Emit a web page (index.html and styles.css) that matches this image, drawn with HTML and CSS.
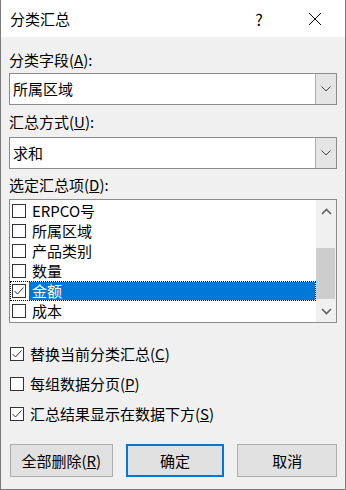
FILE: index.html
```html
<!DOCTYPE html>
<html lang="zh">

<head>
    <meta charset="utf-8">
    <meta name="viewport" content="width=device-width, initial-scale=1.0">
    <title>分类汇总</title>
    <link rel="stylesheet" href="styles.css">
</head>

<body>
    <div class="dialog">
        <div class="titlebar">
            <div class="title">分类汇总</div>
            <div class="help">?</div>
            <div class="close">
                <svg width="14" height="14" viewBox="0 0 14 14">
                    <path d="M1 1 L13 13 M13 1 L1 13" stroke="#000" stroke-width="1" fill="none" />
                </svg>
            </div>
        </div>

        <div class="content">
            <div class="label first">分类字段(<u>A</u>):</div>
            <div class="select">
                <div class="value">所属区域</div>
                <div class="dropbtn">
                    <svg width="10" height="6" viewBox="0 0 10 6">
                        <path d="M0.5 0.5 L5 5 L9.5 0.5" stroke="#444" stroke-width="1" fill="none" />
                    </svg>
                </div>
            </div>

            <div class="label second">汇总方式(<u>U</u>):</div>
            <div class="select select2">
                <div class="value">求和</div>
                <div class="dropbtn">
                    <svg width="10" height="6" viewBox="0 0 10 6">
                        <path d="M0.5 0.5 L5 5 L9.5 0.5" stroke="#444" stroke-width="1" fill="none" />
                    </svg>
                </div>
            </div>

            <div class="label third">选定汇总项(<u>D</u>):</div>
            <div class="listbox">
                <div class="items">
                    <div class="item"><span class="cb"></span><span class="txt">ERPCO号</span></div>
                    <div class="item"><span class="cb"></span><span class="txt">所属区域</span></div>
                    <div class="item"><span class="cb"></span><span class="txt">产品类别</span></div>
                    <div class="item"><span class="cb"></span><span class="txt">数量</span></div>
                    <div class="item valgt">
                        <span class="cb">
                            <svg width="12" height="12" viewBox="0 0 12 12">
                                <path d="M1.5 6 L4.5 9 L10.5 2.5" stroke="#333" stroke-width="1" fill="none" />
                            </svg>
                        </span>
                        <span class="txt">金额</span>
                    </div>
                    <div class="item"><span class="cb"></span><span class="txt">成本</span></div>
                </div>
                <div class="scrollbar">
                    <div class="arrow">
                        <svg width="11" height="7" viewBox="0 0 11 7">
                            <path d="M1 6 L5.5 1.5 L10 6" stroke="#606060" stroke-width="1.6" fill="none" />
                        </svg>
                    </div>
                    <div class="track"><div class="thumb"></div></div>
                    <div class="arrow">
                        <svg width="11" height="7" viewBox="0 0 11 7">
                            <path d="M1 1 L5.5 5.5 L10 1" stroke="#606060" stroke-width="1.6" fill="none" />
                        </svg>
                    </div>
                </div>
            </div>

            <div class="options">
                <div class="option">
                    <span class="cb">
                        <svg width="12" height="12" viewBox="0 0 12 12">
                            <path d="M1.5 6 L4.5 9 L10.5 2.5" stroke="#333" stroke-width="1" fill="none" />
                        </svg>
                    </span>
                    <span>替换当前分类汇总(<u>C</u>)</span>
                </div>
                <div class="option">
                    <span class="cb"></span>
                    <span>每组数据分页(<u>P</u>)</span>
                </div>
                <div class="option">
                    <span class="cb">
                        <svg width="12" height="12" viewBox="0 0 12 12">
                            <path d="M1.5 6 L4.5 9 L10.5 2.5" stroke="#333" stroke-width="1" fill="none" />
                        </svg>
                    </span>
                    <span>汇总结果显示在数据下方(<u>S</u>)</span>
                </div>
            </div>

            <div class="buttons">
                <button class="knap slet">全部删除(<u>R</u>)</button>
                <button class="knap ok">确定</button>
                <button class="knap annuller">取消</button>
            </div>
        </div>
    </div>
</body>

</html>
```

FILE: styles.css
```css
body {
    margin: 0;
    font-family: "Noto Sans CJK SC", "Microsoft YaHei", sans-serif;
    font-size: 15px;
    color: #000;
}

.dialog {
    width: 346px;
    height: 490px;
    box-sizing: border-box;
    border: 1px solid #7a7a7a;
    border-top: none;
    background-color: #f0f0f0;
    display: flex;
    flex-direction: column;
}

.titlebar {
    height: 37px;
    background-color: #fff;
    display: flex;
    align-items: center;
    padding-left: 9px;
}

.title {
    flex: 1;
    line-height: 20px;
}

.help {
    width: 20px;
    text-align: center;
    font-size: 16px;
    line-height: 20px;
    margin-right: 39px;
}

.close {
    width: 14px;
    height: 14px;
    margin-right: 23px;
    display: flex;
}

.content {
    padding: 0 8px;
    display: flex;
    flex-direction: column;
}

.label {
    line-height: 20px;
    height: 20px;
}

.first {
    margin-top: 13px;
}

.second {
    margin-top: 7px;
}

.third {
    margin-top: 6px;
}

.select {
    margin-top: 3px;
    height: 32px;
    box-sizing: border-box;
    border: 1px solid #8c8c8c;
    background-color: #fff;
    display: flex;
}

.select2 {
    margin-top: 5px;
}

.value {
    flex: 1;
    padding-left: 3px;
    line-height: 30px;
}

.dropbtn {
    width: 20px;
    background-color: #e5e5e5;
    border-left: 1px solid #adadad;
    display: flex;
    align-items: center;
    justify-content: center;
}

.listbox {
    margin-top: 4px;
    height: 124px;
    box-sizing: border-box;
    border: 1px solid #8c8c8c;
    background-color: #fff;
    display: flex;
}

.items {
    flex: 1;
    padding-top: 1px;
    overflow: hidden;
}

.item {
    height: 20px;
    display: flex;
    align-items: center;
    box-sizing: border-box;
}

.item .cb {
    margin-left: 2px;
}

.txt {
    margin-left: 3px;
    padding-left: 3px;
    flex: 1;
    line-height: 20px;
    height: 20px;
}

.valgt {
    outline: 1px dotted #000;
    outline-offset: -1px;
}

.valgt .txt {
    background-color: #0078d7;
    color: #fff;
    height: 18px;
    line-height: 18px;
    margin-right: 1px;
}

.cb {
    width: 14px;
    height: 14px;
    box-sizing: border-box;
    border: 1px solid #333;
    background-color: #fff;
    display: flex;
    align-items: center;
    justify-content: center;
    flex-shrink: 0;
}

.scrollbar {
    width: 20px;
    background-color: #f0f0f0;
    display: flex;
    flex-direction: column;
}

.arrow {
    height: 22px;
    display: flex;
    align-items: center;
    justify-content: center;
}

.track {
    flex: 1;
    padding-top: 26px;
}

.thumb {
    height: 51px;
    margin-right: 1px;
    background-color: #cdcdcd;
}

.options {
    margin-top: 21px;
    display: flex;
    flex-direction: column;
    gap: 10px;
}

.option {
    height: 20px;
    line-height: 20px;
    display: flex;
    align-items: center;
    gap: 6px;
}

.option .cb {
    margin-left: 1px;
}

.buttons {
    margin-top: 20px;
    display: flex;
    gap: 13px;
    padding-left: 1px;
}

.knap {
    height: 33px;
    box-sizing: border-box;
    background-color: #e1e1e1;
    border: 1px solid #adadad;
    font-family: inherit;
    font-size: 15px;
    color: #000;
    padding: 0;
}

.slet {
    width: 103px;
}

.ok {
    width: 99px;
    border: 2px solid #0078d7;
}

.annuller {
    width: 100px;
}
```
